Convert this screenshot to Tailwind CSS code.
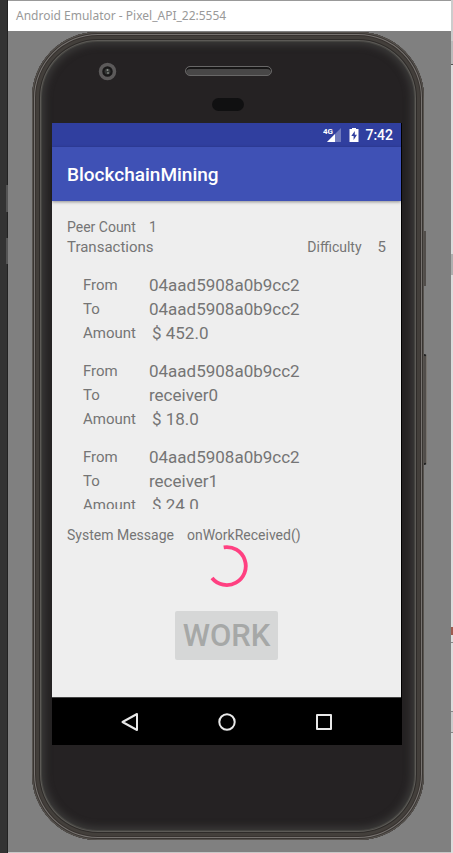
<!DOCTYPE html>
<html lang="en">
<head>
<meta charset="utf-8">
<meta name="viewport" content="width=device-width, initial-scale=1">
<title>Android Emulator - Pixel_API_22:5554</title>
<script src="https://cdn.jsdelivr.net/npm/@tailwindcss/browser@4"></script>
</head>
<body class="flex min-h-screen font-[Roboto,sans-serif]">
<!-- Desktop behind the window, left edge -->
<div class="flex w-2 shrink-0 flex-col bg-[#333333] shadow-[inset_-1px_0_0_#222222]">
  <div class="mt-[185px] ml-auto h-[27px] w-[2px] bg-[#555555]"></div>
  <div class="mt-[26px] ml-auto h-[26px] w-[2px] bg-[#555555]"></div>
</div>

<div class="flex min-w-0 grow flex-col border-y border-t-[#999999] border-b-[#c8c8c8] bg-[#808080]">
  <header class="flex h-[30px] items-center bg-white px-2">
    <h1 class="font-['Noto_Sans',sans-serif] text-[12px] leading-4 text-[#999999]">Android Emulator - Pixel_API_22:5554</h1>
  </header>

  <!-- Phone body -->
  <div class="relative mt-px mr-[27px] mb-3 ml-6 flex grow flex-col rounded-[66px] bg-[#252223] shadow-[inset_0_0_0_1px_#57534f,inset_0_0_0_2px_#393532,inset_0_0_0_3px_#777370,inset_0_0_0_4px_#37322f,inset_0_0_0_7px_#433f3b,inset_0_0_0_8px_#2e2b29,inset_0_0_0_9px_#5c5a56,inset_0_0_0_10px_#444340,inset_0_0_7px_13px_#3a3938]">
    <div class="absolute top-[199px] -right-[2px] h-[55px] w-[2px] bg-[#514d4a]"></div>
    <div class="absolute top-[322px] -right-[3px] h-[111px] w-[3px] rounded-r-sm border-y-2 border-r border-y-[#222222] border-r-[#77736e] bg-[#514d4a]"></div>

    <div class="flex h-[91px] shrink-0 flex-col items-center pt-[34px]">
      <svg class="absolute top-[30px] left-[66px]" width="19" height="19" viewBox="0 0 19 19" aria-hidden="true">
        <circle cx="9.500" cy="9.500" r="7" fill="#191818" stroke="#5c5a5a" stroke-width="3.500"/>
        <circle cx="9.500" cy="9.500" r="3" fill="#343735"/>
        <circle cx="9.500" cy="8" r="1" fill="#8c918c"/>
        <circle cx="10" cy="11" r="1" fill="#7b807b"/>
      </svg>
      <div class="h-[10px] w-[87px] rounded-full border border-[#686767] bg-[#484747] shadow-[inset_0_2px_0_#171616]"></div>
      <div class="mt-[22px] h-[13px] w-8 rounded-full bg-[#101011]"></div>
    </div>

    <!-- Device screen -->
    <div class="mr-[23px] ml-5 flex grow flex-col bg-[#eeeeee] shadow-[1px_0_0_#000000]">
      <div class="flex h-6 shrink-0 items-center justify-end bg-[#303f9f] pr-2 text-white">
        <svg width="19" height="16" viewBox="0 0 19 16" role="img" aria-label="4G signal">
          <path d="M18 1V15H4Z" fill="#6f79bc"/>
          <path d="M12 7V15H4Z" fill="#fff"/>
          <text x="0" y="7" font-family="Roboto, sans-serif" font-size="8" font-weight="700" fill="#fff">4G</text>
        </svg>
        <svg class="ml-[7px]" width="10" height="16" viewBox="0 0 10 16" role="img" aria-label="Battery charging">
          <path d="M3 1H7V2H9.500V15H.5V2H3Z" fill="#fff"/>
          <path d="M5.800 4L2.300 9H4.600V13L8 7.800H5.800Z" fill="#303f9f"/>
        </svg>
        <span class="ml-[6px] text-[14px] leading-6 font-medium">7:42</span>
      </div>
      <div class="flex h-[54px] shrink-0 items-center bg-[#3f51b5] px-[15px] pt-[2px] shadow-[0_1px_3px_#00000066]">
        <h2 class="text-[19px] leading-6 font-medium text-white">BlockchainMining</h2>
      </div>

      <main class="flex grow flex-col px-[15px] pt-4 text-[#757575]">
        <div class="flex gap-[13px] text-[14px] leading-5"><span>Peer Count</span><span>1</span></div>
        <div class="flex items-center leading-5">
          <h3 class="grow text-[15px]">Transactions</h3>
          <span class="text-[14px]">Difficulty</span>
          <span class="ml-4 text-[15px]">5</span>
        </div>

        <div class="h-[252px] overflow-hidden px-4 pt-4 text-[15px] leading-6">
          <dl class="mb-[14px]">
            <div class="flex gap-4"><dt class="min-w-[50px]">From</dt><dd class="text-[17px]">04aad5908a0b9cc2</dd></div>
            <div class="flex gap-4"><dt class="min-w-[50px]">To</dt><dd class="text-[17px]">04aad5908a0b9cc2</dd></div>
            <div class="flex gap-4"><dt class="min-w-[50px]">Amount</dt><dd class="text-[17px]">$ 452.0</dd></div>
          </dl>
          <dl class="mb-[14px]">
            <div class="flex gap-4"><dt class="min-w-[50px]">From</dt><dd class="text-[17px]">04aad5908a0b9cc2</dd></div>
            <div class="flex gap-4"><dt class="min-w-[50px]">To</dt><dd class="text-[17px]">receiver0</dd></div>
            <div class="flex gap-4"><dt class="min-w-[50px]">Amount</dt><dd class="text-[17px]">$ 18.0</dd></div>
          </dl>
          <dl>
            <div class="flex gap-4"><dt class="min-w-[50px]">From</dt><dd class="text-[17px]">04aad5908a0b9cc2</dd></div>
            <div class="flex gap-4"><dt class="min-w-[50px]">To</dt><dd class="text-[17px]">receiver1</dd></div>
            <div class="flex gap-4"><dt class="min-w-[50px]">Amount</dt><dd class="text-[17px]">$ 24.0</dd></div>
          </dl>
        </div>

        <div class="mt-4 flex gap-[13px] text-[14px] leading-5"><span>System Message</span><span>onWorkReceived()</span></div>
        <svg class="self-center" width="42" height="42" viewBox="0 0 42 42" role="img" aria-label="Working">
          <path d="M17.700 2.300A19 19 0 1 1 6 33" fill="none" stroke="#ff4081" stroke-width="3.800"/>
        </svg>
        <button type="button" disabled class="mt-6 h-[49px] self-center rounded-[2px] bg-[#d6d7d7] px-2 text-[31px] leading-8 font-medium text-[#a6a8a7]">WORK</button>
      </main>

      <nav class="flex h-12 shrink-0 justify-center border-t border-[#444444] bg-black shadow-[1px_0_0_#000000]">
        <button type="button" aria-label="Back" class="flex w-[97px] items-center justify-center">
          <svg width="20" height="20" viewBox="0 0 20 20" fill="none" stroke="#e8e8e8" stroke-width="2" stroke-linejoin="round"><path d="M17 2V18L2.500 10Z"/></svg>
        </button>
        <button type="button" aria-label="Home" class="flex w-[97px] items-center justify-center">
          <svg width="20" height="20" viewBox="0 0 20 20" fill="none" stroke="#e8e8e8" stroke-width="2"><circle cx="10" cy="10" r="7.700"/></svg>
        </button>
        <button type="button" aria-label="Overview" class="flex w-[97px] items-center justify-center">
          <svg width="20" height="20" viewBox="0 0 20 20" fill="none" stroke="#e8e8e8" stroke-width="2" stroke-linejoin="round"><path d="M3 3H17V17H3Z"/></svg>
        </button>
      </nav>
    </div>

    <div class="h-[95px] shrink-0"></div>
  </div>
</div>

<!-- Desktop behind the window, right edge -->
<div class="flex w-[2px] shrink-0 flex-col bg-[#dddddd]">
  <div class="h-[41px] bg-[#cccccc]"></div>
  <div class="h-6 border-b border-[#555555] bg-[#bbbbbb]"></div>
  <div class="mt-[189px] h-[21px] bg-[#b0b0b0]"></div>
  <div class="mt-[352px] h-2 bg-[#a05c50]"></div>
  <div class="mt-[7px] h-px bg-[#888888]"></div>
  <div class="mt-[68px] h-[22px] border-y border-[#888888] bg-[#cccccc]"></div>
</div>
</body>
</html>
